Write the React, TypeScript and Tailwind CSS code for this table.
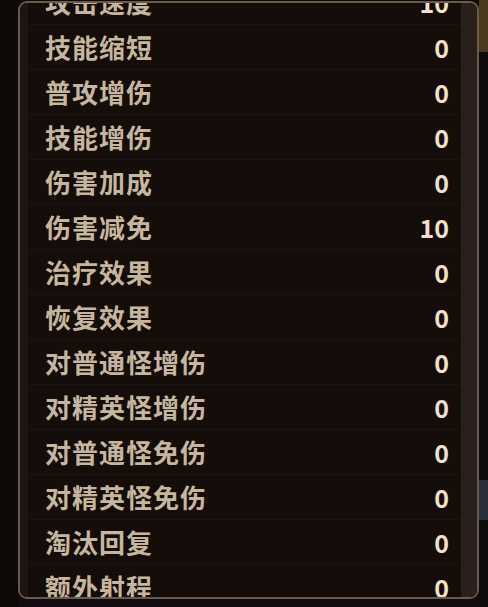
const stats: [string, string][] = [
  ["攻击速度", "10"],
  ["技能缩短", "0"],
  ["普攻增伤", "0"],
  ["技能增伤", "0"],
  ["伤害加成", "0"],
  ["伤害减免", "10"],
  ["治疗效果", "0"],
  ["恢复效果", "0"],
  ["对普通怪增伤", "0"],
  ["对精英怪增伤", "0"],
  ["对普通怪免伤", "0"],
  ["对精英怪免伤", "0"],
  ["淘汰回复", "0"],
  ["额外射程", "0"],
]

export default function App() {
  return (
    <div
      className="flex w-[488px] h-[607px] overflow-hidden bg-[#0e0a08]"
      style={{ fontFamily: '"Noto Sans CJK SC", "Noto Sans", sans-serif' }}
    >
      <div className="w-[18px] shrink-0 bg-[#0c0907]" />

      <div className="flex flex-col shrink-0 w-[461px]">
        <div className="mt-px h-[598px] rounded-[9px] border-2 border-[#6b5a4a] bg-[#140d0a] overflow-hidden flex">
          <div className="w-[8px] shrink-0 bg-[#1d1511]" />

          <div className="flex-1 overflow-hidden">
            {/* list is scrolled, first row partly hidden */}
            <div className="-mt-[23px] flex flex-col">
              {stats.map(([label, value]) => (
                <div
                  key={label}
                  className="h-[45px] shrink-0 flex items-center justify-between pl-[17px] pr-[12px] border-b border-[#1d1512]"
                >
                  <span className="text-[26px] font-bold leading-none tracking-[1px] text-[#c6b69f]">
                    {label}
                  </span>
                  <span className="text-[25px] font-bold leading-none text-[#f2e0c8]">{value}</span>
                </div>
              ))}
            </div>
          </div>

          <div className="w-[16px] shrink-0 bg-[#2a201b]" />
        </div>
        <div className="flex-1 bg-[#110c12]" />
      </div>

      <div className="flex-1 flex flex-col">
        <div className="h-[52px] bg-[#4a3a20]" />
        <div className="h-[428px] bg-[#0f0b0a]" />
        <div className="h-[40px] bg-[#27303a]" />
        <div className="flex-1 bg-[#0f0b0a]" />
      </div>
    </div>
  )
}
